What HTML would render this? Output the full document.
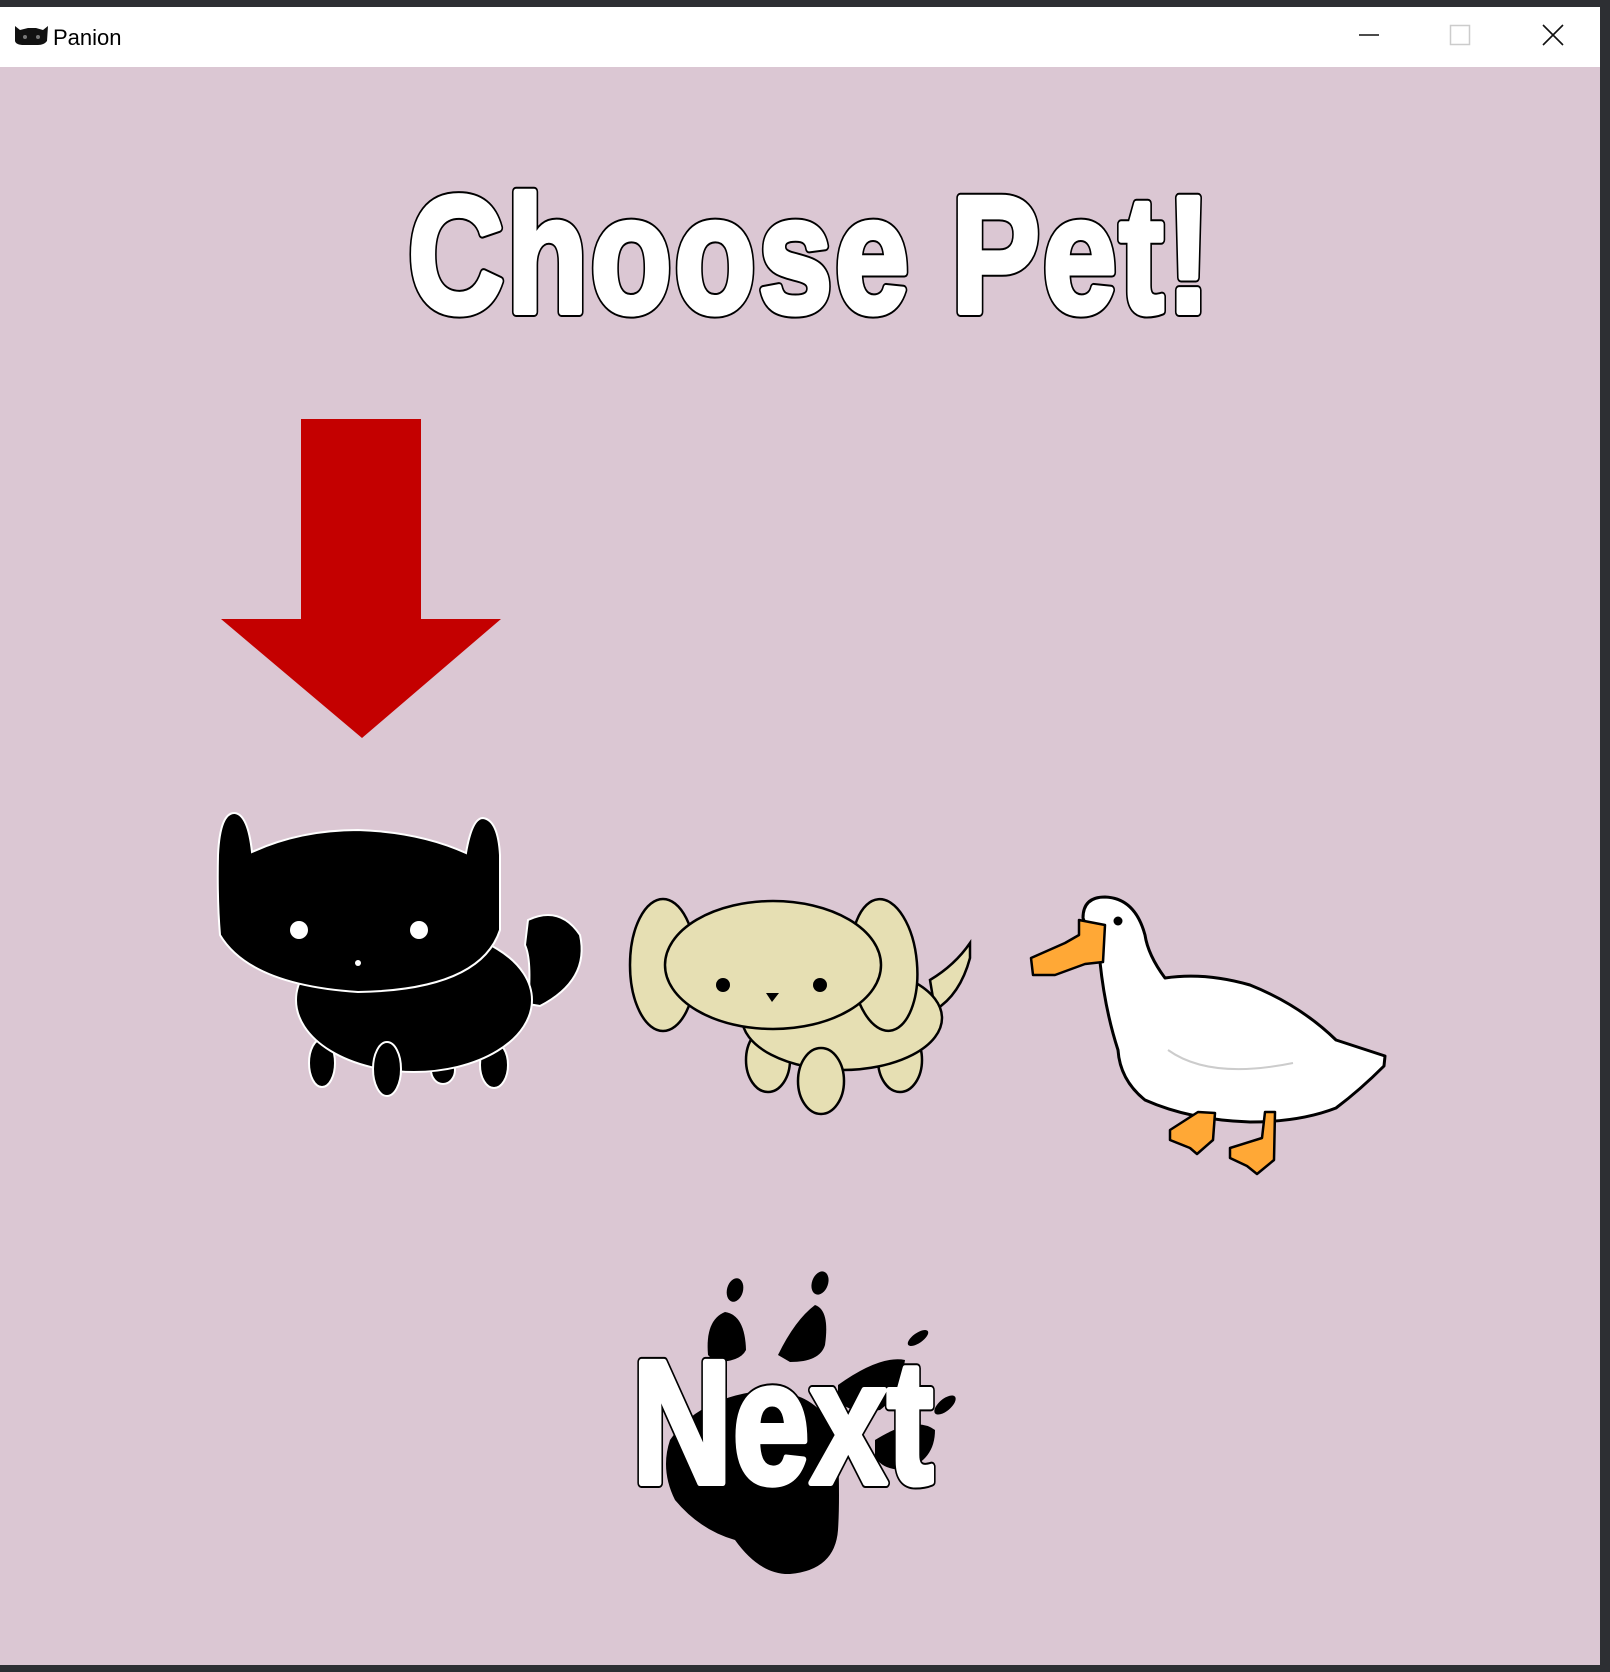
<!DOCTYPE html>
<html><head><meta charset="utf-8"><style>
html,body{margin:0;padding:0;background:#2b2b2b;}
svg{display:block}
.t{font-family:"Liberation Sans",Arial,sans-serif;font-weight:700;}
</style></head><body>
<svg width="1610" height="1672" viewBox="0 0 1610 1672" xmlns="http://www.w3.org/2000/svg">
<rect x="0" y="0" width="1610" height="1672" fill="#2d2f33"/>
<rect x="0" y="7" width="1600" height="60" fill="#ffffff"/>
<rect x="0" y="67" width="1600" height="1598" fill="#dbc7d3"/>
<path d="M15 26 L20 30 L28 28 L36 28 L43 30 L48 26 L47 41 Q44 45 38 45 L24 45 Q16 45 15 41 Z" fill="#111"/>
<circle cx="25" cy="37" r="2" fill="#777"/><circle cx="38" cy="37" r="2" fill="#777"/>
<text x="53" y="45" style="font-family:'Liberation Sans',sans-serif;font-size:22px" fill="#000">Panion</text>
<line x1="1359" y1="35" x2="1379" y2="35" stroke="#111" stroke-width="1.5"/>
<rect x="1450.5" y="25.5" width="19" height="19" fill="none" stroke="#ccc" stroke-width="1.5"/>
<path d="M1543 25 L1563 45 M1563 25 L1543 45" stroke="#111" stroke-width="1.6"/>

<g transform="translate(408,312) scale(0.80,1)">
<text class="t" x="0" y="0" style="font-size:166px;letter-spacing:3.5px" fill="#000" stroke="#000" stroke-width="10" stroke-linejoin="round">Choose Pet!</text>
<text class="t" x="0" y="0" style="font-size:166px;letter-spacing:3.5px" fill="#fff" stroke="#fff" stroke-width="6" stroke-linejoin="round">Choose Pet!</text>
</g>

<path d="M301 419 H421 V619 H501 L362 738 L221 619 H301 Z" fill="#c40000"/>

<g stroke="#fff" stroke-width="2">
<ellipse cx="322" cy="1063" rx="13" ry="24" fill="#000"/>
<ellipse cx="443" cy="1070" rx="12" ry="14" fill="#000"/>
<ellipse cx="494" cy="1065" rx="14" ry="23" fill="#000"/>
<path d="M528 920 Q560 905 580 935 Q590 980 540 1006 L528 1004 Q532 960 525 945 Z" fill="#000"/>
<ellipse cx="414" cy="1000" rx="118" ry="72" fill="#000"/>
<ellipse cx="387" cy="1069" rx="14" ry="27" fill="#000"/>
<path d="M218 855 Q220 812 235 813 Q248 815 252 852 Q300 830 358 830 Q420 832 466 853 Q472 818 483 818 Q498 820 500 855 L500 930 Q480 990 358 992 Q250 985 220 935 Q217 900 218 855 Z" fill="#000"/>
</g>
<circle cx="299" cy="930" r="9" fill="#fff"/>
<circle cx="419" cy="930" r="9" fill="#fff"/>
<circle cx="358" cy="963" r="3" fill="#fff"/>

<g stroke="#000" stroke-width="2.5" fill="#e6dfb3">
<path d="M930 980 Q955 965 970 943 L970 958 Q960 995 935 1010 Z"/>
<ellipse cx="768" cy="1060" rx="22" ry="32"/>
<ellipse cx="900" cy="1060" rx="22" ry="32"/>
<ellipse cx="842" cy="1018" rx="100" ry="52"/>
<ellipse cx="884" cy="965" rx="33" ry="66" transform="rotate(-5 884 965)"/>
<ellipse cx="663" cy="965" rx="33" ry="66"/>
<ellipse cx="773" cy="965" rx="108" ry="64"/>
<ellipse cx="821" cy="1081" rx="23" ry="33"/>
</g>
<circle cx="723" cy="985" r="7" fill="#000"/>
<circle cx="820" cy="985" r="7" fill="#000"/>
<path d="M766 993 L779 993 L772 1002 Z" fill="#000"/>

<path d="M1083 918 Q1083 897 1105 897 Q1135 898 1145 935 Q1148 955 1165 978 Q1205 972 1250 985 Q1300 1005 1336 1040 L1385 1056 L1384 1066 Q1360 1090 1336 1108 Q1300 1122 1250 1122 Q1190 1120 1145 1100 Q1120 1080 1118 1050 Q1105 1010 1100 962 Z" fill="#fff" stroke="#000" stroke-width="3" stroke-linejoin="round"/>
<path d="M1168 1050 Q1210 1080 1293 1063" fill="none" stroke="#ccc" stroke-width="2"/>
<path d="M1079 920 L1105 925 L1103 962 L1085 964 L1055 975 L1033 975 L1031 958 L1065 943 L1079 935 Z" fill="#ffa836" stroke="#000" stroke-width="2.5" stroke-linejoin="round"/>
<circle cx="1118" cy="921" r="4.5" fill="#000"/>
<path d="M1198 1112 L1215 1113 L1213 1140 L1197 1154 L1190 1148 L1170 1140 L1170 1130 Z" fill="#ffa836" stroke="#000" stroke-width="2.5" stroke-linejoin="round"/>
<path d="M1265 1112 L1275 1112 L1274 1160 L1257 1174 L1247 1166 L1230 1158 L1230 1148 L1262 1138 Z" fill="#ffa836" stroke="#000" stroke-width="2.5" stroke-linejoin="round"/>

<g fill="#000">
<path d="M670 1440 Q700 1395 770 1390 Q830 1395 838 1450 Q840 1500 838 1530 Q835 1570 790 1574 Q760 1575 735 1540 Q700 1530 675 1500 Q660 1470 670 1440 Z"/>
<ellipse cx="735" cy="1290" rx="8" ry="12" transform="rotate(15 735 1290)"/>
<path d="M708 1355 Q705 1320 725 1312 Q745 1315 746 1350 Q740 1362 715 1362 Z"/>
<ellipse cx="820" cy="1283" rx="8" ry="12" transform="rotate(20 820 1283)"/>
<path d="M778 1355 Q795 1320 815 1305 Q830 1310 825 1345 Q820 1362 790 1362 Z"/>
<ellipse cx="918" cy="1338" rx="12" ry="5" transform="rotate(-35 918 1338)"/>
<path d="M838 1385 Q880 1355 905 1360 Q900 1395 880 1410 Q850 1415 838 1400 Z"/>
<ellipse cx="945" cy="1405" rx="13" ry="6" transform="rotate(-40 945 1405)"/>
<path d="M875 1440 Q915 1415 935 1430 Q935 1460 905 1470 Q880 1470 875 1455 Z"/>
</g>
<g transform="translate(632,1483) scale(0.79,1)">
<text class="t" x="0" y="0" style="font-size:176px" fill="#000" stroke="#000" stroke-width="10" stroke-linejoin="round">Next</text>
<text class="t" x="0" y="0" style="font-size:176px" fill="#fff" stroke="#fff" stroke-width="6" stroke-linejoin="round">Next</text>
</g>
</svg>
</body></html>
